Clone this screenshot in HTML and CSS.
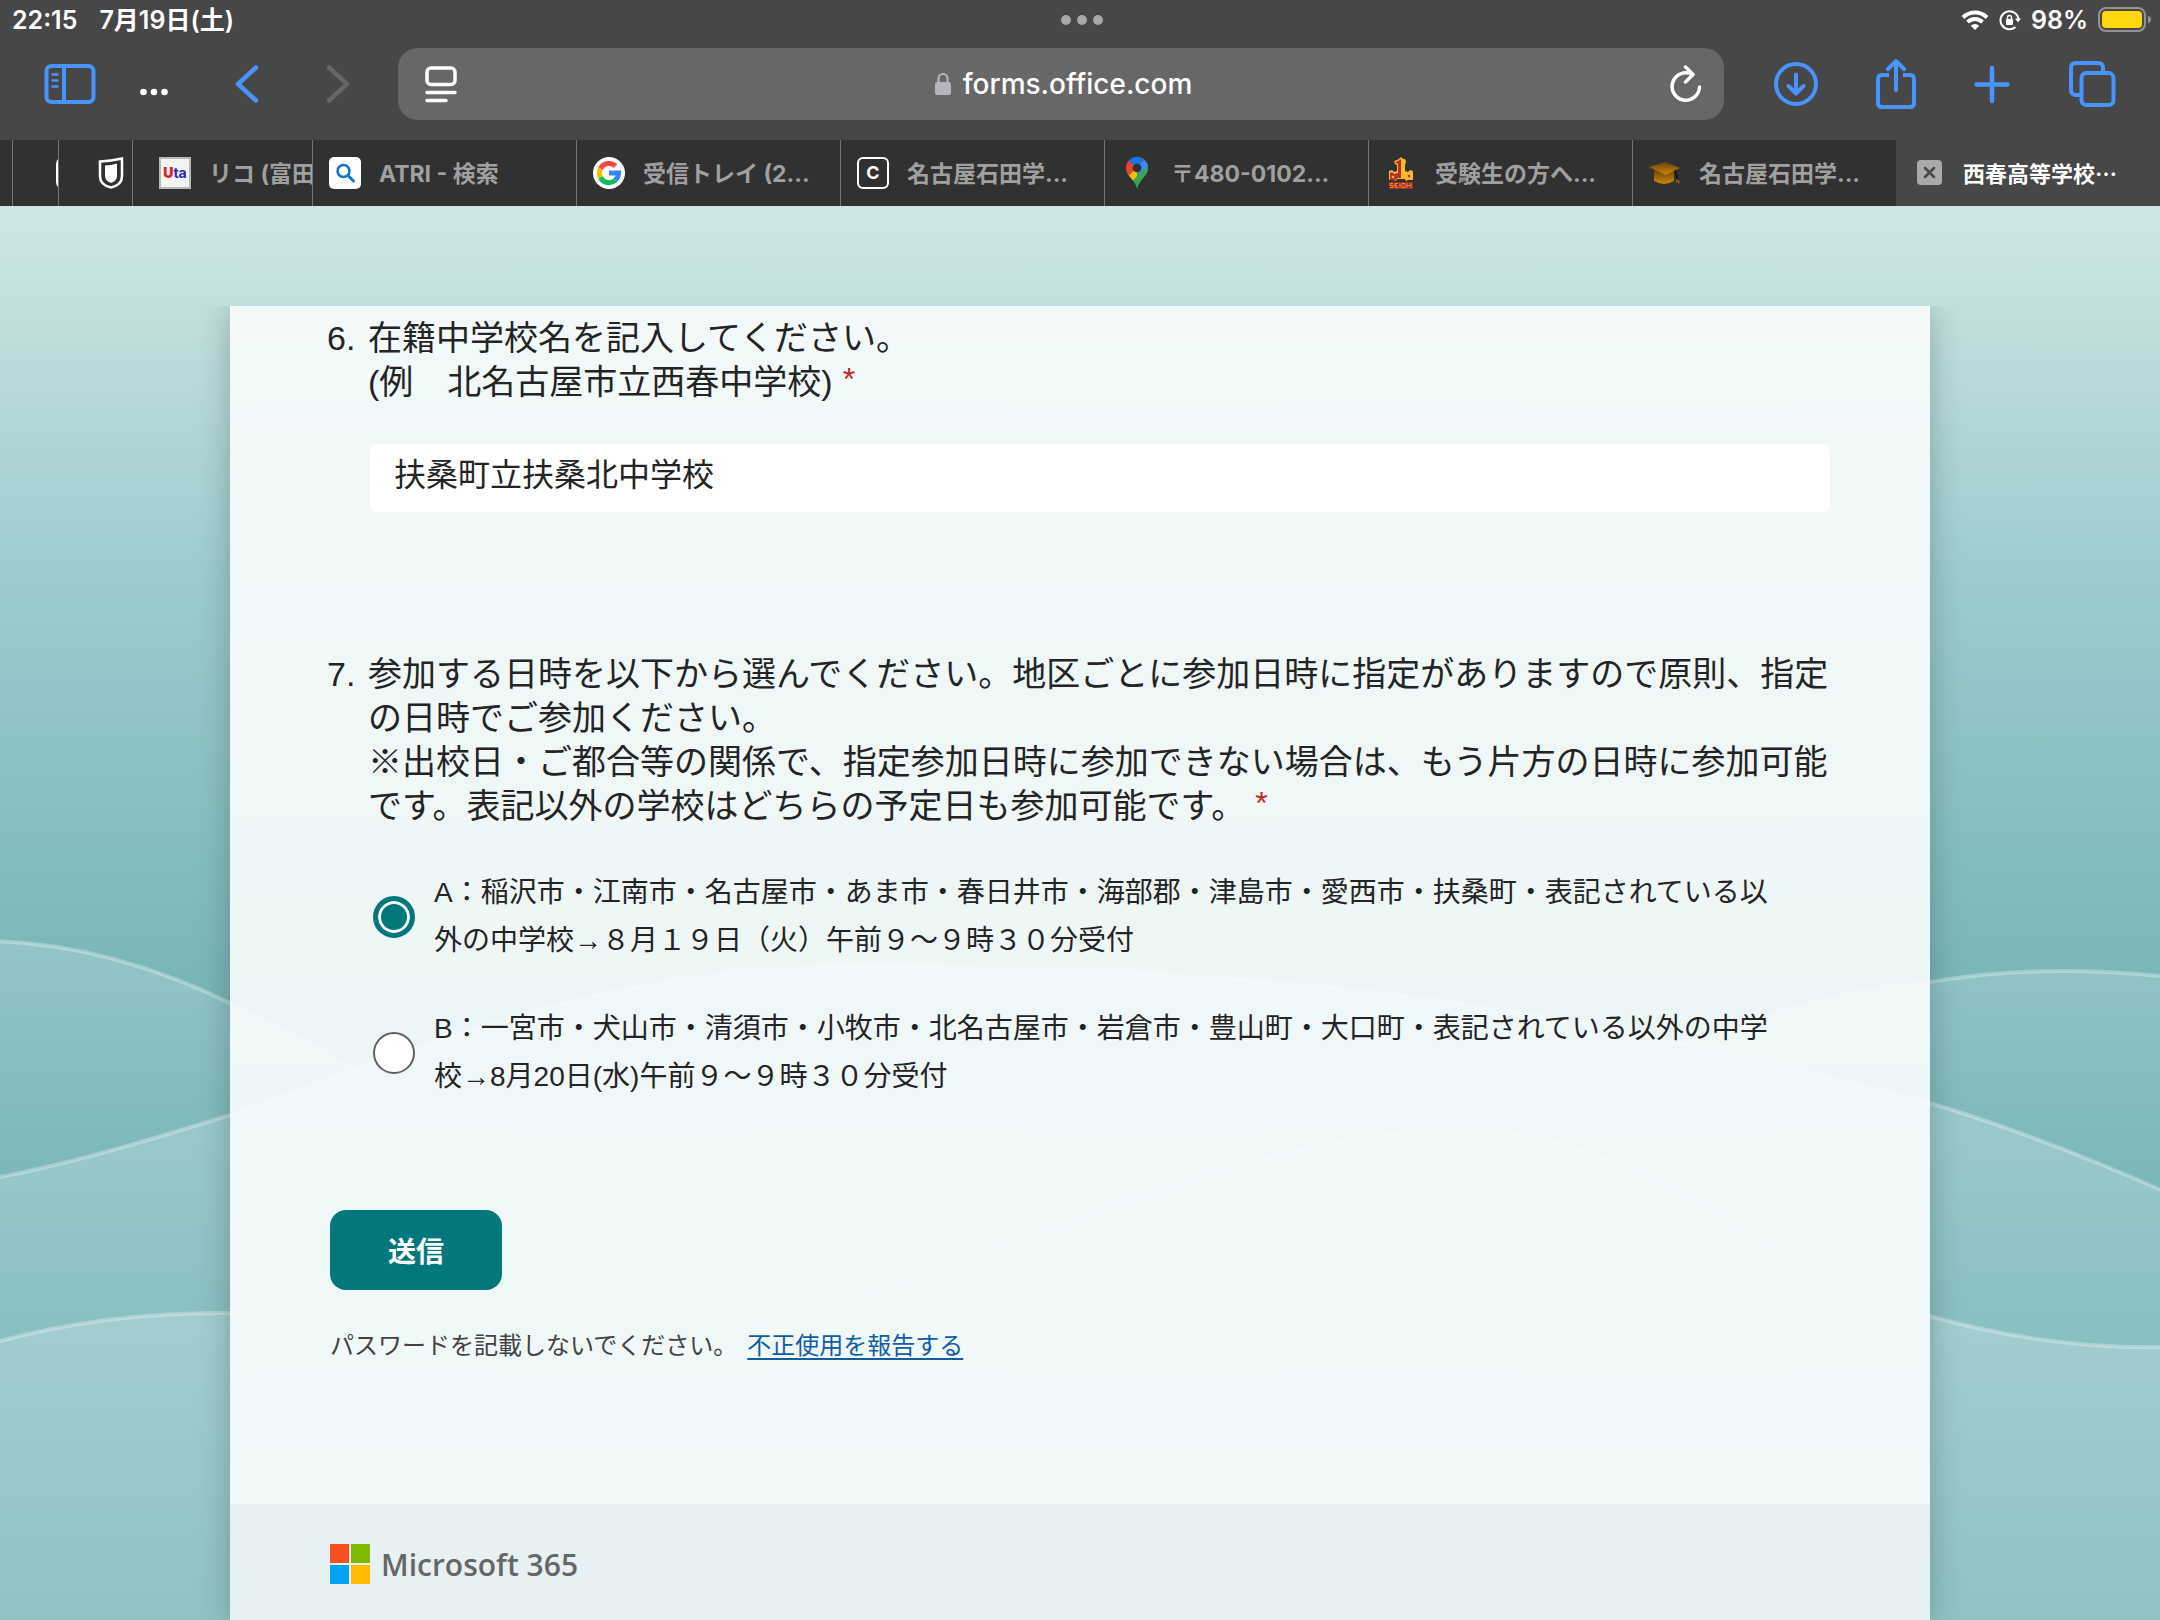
FILE: index.html
```html
<!DOCTYPE html>
<html lang="ja">
<head>
    <meta charset="UTF-8">
    <meta name="viewport" content="width=device-width, initial-scale=1.0">
    <title>西春高等学校</title>
    <link rel="stylesheet" href="styles.css">
</head>
<body>

<header class="browser">
    <div class="status">
        <div class="status-left">
            <span>22:15</span>
            <span>7月19日(土)</span>
        </div>
        <div class="status-dots"><i></i><i></i><i></i></div>
        <div class="status-right">
            <svg width="28" height="22" viewBox="0 0 28 22" fill="none" stroke="#fff" stroke-width="4">
                <path d="M2 8.500a17 17 0 0 1 24 0"/>
                <path d="M6.500 13.200a10.600 10.600 0 0 1 15 0"/>
                <path d="M14 21l-4.200-4.200a6 6 0 0 1 8.400 0z" fill="#fff" stroke="none"/>
            </svg>
            <svg width="22" height="22" viewBox="0 0 22 22" fill="none" stroke="#fff" stroke-width="2">
                <path d="M16.500 18a9 9 0 1 1 3-7"/>
                <path d="M16 9.500h6l-3 4z" fill="#fff" stroke="none"/>
                <rect x="7" y="10" width="7" height="6" rx="1" fill="#fff" stroke="none"/>
                <path d="M8.500 11V8.500a2 2 0 0 1 4 0V11" stroke-width="1.500"/>
            </svg>
            <span>98%</span>
            <svg width="54" height="26" viewBox="0 0 54 26">
                <rect x="1" y="1" width="46" height="23" rx="7" fill="none" stroke="#939393" stroke-width="2"/>
                <rect x="4" y="4" width="40" height="17" rx="4" fill="#ffd60a"/>
                <path d="M50 8.500c4 1.500 4 6.500 0 8z" fill="#939393"/>
            </svg>
        </div>
    </div>

    <div class="toolbar">
        <div class="tools tools-left">
            <button class="tool" aria-label="サイドバー">
                <svg width="52" height="42" viewBox="0 0 52 42" fill="none" stroke="#4794ff" stroke-width="4" stroke-linecap="round">
                    <rect x="2.500" y="3" width="47" height="36" rx="5"/>
                    <path d="M20 3v36"/>
                    <path d="M8.500 11.500h5M8.500 17.500h5M8.500 23.500h5" stroke-width="2.500"/>
                </svg>
            </button>
            <button class="tool" aria-label="その他">
                <svg width="28" height="42" viewBox="0 0 28 42" fill="#fff">
                    <circle cx="3.500" cy="29" r="3.300"/>
                    <circle cx="14" cy="29" r="3.300"/>
                    <circle cx="24.500" cy="29" r="3.300"/>
                </svg>
            </button>
            <button class="tool" aria-label="戻る">
                <svg width="24" height="40" viewBox="0 0 24 40" fill="none" stroke="#4794ff" stroke-width="4.500" stroke-linecap="round" stroke-linejoin="round">
                    <path d="M21 3.500L3 20l18 16.500"/>
                </svg>
            </button>
            <button class="tool" aria-label="進む">
                <svg width="24" height="40" viewBox="0 0 24 40" fill="none" stroke="#666" stroke-width="4.500" stroke-linecap="round" stroke-linejoin="round">
                    <path d="M3 3.500L21 20 3 36.500"/>
                </svg>
            </button>
        </div>

        <div class="address">
            <button class="tool" aria-label="ページ設定">
                <svg width="32" height="38" viewBox="0 0 32 38" fill="none" stroke="#fff" stroke-width="3.500" stroke-linecap="round">
                    <rect x="2" y="3" width="28" height="16.500" rx="4"/>
                    <path d="M2 27.500h28M2 35.500h19"/>
                </svg>
            </button>
            <div class="address-url">
                <svg width="16" height="24" viewBox="0 0 16 24">
                    <path d="M3.500 12V6.500a4.500 4.500 0 0 1 9 0V12" fill="none" stroke="#b5b5bd" stroke-width="2.200"/>
                    <rect x="0" y="10" width="16" height="13" rx="2.500" fill="#b5b5bd"/>
                </svg>
                <span>forms.office.com</span>
            </div>
            <button class="tool" aria-label="再読み込み">
                <svg width="32" height="38" viewBox="0 0 32 38" fill="none" stroke="#fff" stroke-width="3.500" stroke-linecap="round" stroke-linejoin="round">
                    <path d="M22 9.300A13.700 13.700 0 1 0 29.500 22"/>
                    <path d="M15.500 2l7.500 7.500-7.500 7.500"/>
                </svg>
            </button>
        </div>

        <div class="tools tools-right">
            <button class="tool" aria-label="ダウンロード">
                <svg width="44" height="50" viewBox="0 0 44 50" fill="none" stroke="#4794ff" stroke-width="4" stroke-linecap="round" stroke-linejoin="round">
                    <circle cx="22" cy="25" r="20"/>
                    <path d="M22 15.500v18.500M14.500 27l7.500 7.500 7.500-7.500"/>
                </svg>
            </button>
            <button class="tool" aria-label="共有">
                <svg width="40" height="50" viewBox="0 0 40 50" fill="none" stroke="#4794ff" stroke-width="4" stroke-linecap="round" stroke-linejoin="round">
                    <path d="M13 16H6q-4 0-4 4v24q0 4 4 4h28q4 0 4-4V20q0-4-4-4h-7" stroke-linecap="butt"/>
                    <path d="M20 31V2.500M12 10l8-8 8 8"/>
                </svg>
            </button>
            <button class="tool" aria-label="新規タブ">
                <svg width="36" height="50" viewBox="0 0 36 50" fill="none" stroke="#4794ff" stroke-width="4.500" stroke-linecap="round">
                    <path d="M18 9v33M2.500 25.500h31"/>
                </svg>
            </button>
            <button class="tool" aria-label="タブ一覧">
                <svg width="48" height="50" viewBox="0 0 48 50" fill="none" stroke="#4794ff" stroke-width="4">
                    <rect x="13.500" y="14" width="32" height="32" rx="5"/>
                    <path d="M13 36H8q-5 0-5-5V9q0-5 5-5h22q5 0 5 5v5"/>
                </svg>
            </button>
        </div>
    </div>

    <nav class="tabs">
        <div class="tab"></div>
        <div class="tab tab-cut-icon">
            <svg width="32" height="32" viewBox="0 0 32 32" fill="none" stroke="#fff" stroke-width="2">
                <rect x="1" y="1" width="30" height="30" rx="6"/>
            </svg>
        </div>
        <div class="tab tab-shield">
            <svg width="26" height="32" viewBox="0 0 26 32">
                <path d="M2 4.500Q13 4 24 1.500V19q0 9-11 11.500Q2 28 2 19z" fill="none" stroke="#fff" stroke-width="2.500"/>
                <path d="M7 8.500q6 0 12-2V19q0 5-6 7-6-2-6-7z" fill="#fff"/>
            </svg>
        </div>
        <div class="tab tab-uta">
            <span class="uta"><b>U</b>ta</span>
            <span class="tab-title">リコ (富田</span>
        </div>
        <div class="tab">
            <svg width="32" height="32" viewBox="0 0 32 32">
                <rect width="32" height="32" rx="5" fill="#fff"/>
                <circle cx="14.500" cy="14" r="6" fill="none" stroke="#1572c6" stroke-width="2.500"/>
                <path d="M19 18.500l5.500 5.500" stroke="#1572c6" stroke-width="3" stroke-linecap="round"/>
            </svg>
            <span class="tab-title">ATRI - 検索</span>
        </div>
        <div class="tab">
            <svg width="32" height="32" viewBox="0 0 32 32" fill="none" stroke-width="5">
                <circle cx="16" cy="16" r="16" fill="#fff"/>
                <path d="M7.500 11.500A9.600 9.600 0 0 1 22.500 9" stroke="#ff4641"/>
                <path d="M7.500 20.500a9.600 9.600 0 0 1 0-9" stroke="#fbbc05"/>
                <path d="M22.300 23.300A9.600 9.600 0 0 1 7.500 20.500" stroke="#0ebc5f"/>
                <path d="M16 16h9.600a9.600 9.600 0 0 1-3.500 7.300" stroke="#3186ff"/>
            </svg>
            <span class="tab-title">受信トレイ (2...</span>
        </div>
        <div class="tab">
            <span class="letter-icon">C</span>
            <span class="tab-title">名古屋石田学...</span>
        </div>
        <div class="tab">
            <svg width="32" height="32" viewBox="0 0 32 32">
                <clipPath id="pin"><path d="M16 0a11 11 0 0 1 11 11c0 8-9 11-11 21C14 22 5 19 5 11A11 11 0 0 1 16 0z"/></clipPath>
                <g clip-path="url(#pin)">
                    <path d="M0 0h32v32H0z" fill="#34a853"/>
                    <path d="M3 16V3h6l7 8-8 8z" fill="#ea4335"/>
                    <path d="M7 3l9 8L26 0H9z" fill="#1a73e8"/>
                    <path d="M16 11l9-10 4 6-10 12z" fill="#4285f4"/>
                    <path d="M16 21l12-14v25H16z" fill="#34a853"/>
                    <path d="M6 20l10-9v8l-6 7z" fill="#fbbc04"/>
                </g>
                <circle cx="16" cy="11" r="4.300" fill="#313131"/>
            </svg>
            <span class="tab-title">〒480-0102...</span>
        </div>
        <div class="tab">
            <svg width="32" height="32" viewBox="0 0 32 32">
                <path d="M16 0l2 2h2l1 3-1 3v6l3 1 2-2 3 1v9h-5l-2 1-1-2h-8l-1 2-2-1H4v-9l3-1 2 2 3-1V8l-2-1-1-3 3-1 2-1z" fill="#fdb827"/>
                <path d="M16 2v19h-4l-2 3-5-1v-7l2-1 2 2 4-1V7l-3-2 3-1z" fill="#b5302b"/>
                <circle cx="8" cy="20" r="1.300" fill="#fdb827"/>
                <circle cx="24" cy="19" r="1.300" fill="#b5302b"/>
                <path d="M4 25h24v7H4z" fill="#9a2f26"/>
                <path d="M8 26.500H5v2h3v2H5M13 26.500h-3v4h3M10 28.500h2M15 26v5M17 26.500v4h3v-4zM22 26v5M22 28.500h4M26 26v5" fill="none" stroke="#f08a2a"/>
            </svg>
            <span class="tab-title">受験生の方へ...</span>
        </div>
        <div class="tab">
            <svg width="32" height="32" viewBox="0 0 32 32">
                <defs>
                    <linearGradient id="cap" x2="0" y2="1"><stop stop-color="#6b4300"/><stop offset="1" stop-color="#c98a0c"/></linearGradient>
                </defs>
                <path d="M5 13h20v11q-10 6-20 0z" fill="url(#cap)"/>
                <path d="M0 10l16-5 15 6-14 7z" fill="url(#cap)"/>
                <path d="M26 13q2 5 2 9" fill="none" stroke="#111" stroke-width="1.500"/>
                <path d="M27 22l4 2-1 3-3-2z" fill="#8a5200"/>
            </svg>
            <span class="tab-title">名古屋石田学...</span>
        </div>
        <div class="tab tab-active">
            <button class="tool" aria-label="タブを閉じる">
                <svg width="26" height="26" viewBox="0 0 26 26">
                    <rect width="25" height="25" rx="4" fill="#aaa"/>
                    <path d="M8 8l9 9M17 8l-9 9" stroke="#474747" stroke-width="2.500" stroke-linecap="round"/>
                </svg>
            </button>
            <span class="tab-title">西春高等学校…</span>
        </div>
    </nav>
</header>

<main class="page">
    <svg class="waves" viewBox="0 0 2160 1414" preserveAspectRatio="none">
        <defs>
            <linearGradient id="waveA" gradientUnits="userSpaceOnUse" x1="0" y1="735" x2="0" y2="990">
                <stop stop-color="#93c5c8"/><stop offset="1" stop-color="#7ab6b8"/>
            </linearGradient>
            <linearGradient id="waveB" gradientUnits="userSpaceOnUse" x1="0" y1="900" x2="0" y2="1180">
                <stop stop-color="#9bc9cb"/><stop offset="1" stop-color="#85bec0"/>
            </linearGradient>
            <linearGradient id="waveC" gradientUnits="userSpaceOnUse" x1="0" y1="1105" x2="0" y2="1414">
                <stop stop-color="#a3cdcf"/><stop offset="1" stop-color="#8fc3c4"/>
            </linearGradient>
        </defs>
        <path class="wave-line" fill="url(#waveA)" d="M-10 735C80 737 160 763 230 797C500 930 700 1110 1020 1112C1340 1110 1560 810 1930 776Q2040 757 2170 771V1430H-10z"/>
        <path class="wave-line" fill="url(#waveB)" d="M-10 973C70 958 150 934 230 909C400 850 600 760 850 760C1300 760 1560 800 1930 897Q2040 930 2170 988V1430H-10z"/>
        <path class="wave-line" fill="url(#waveC)" d="M-10 1138Q100 1106 230 1107C380 1106 420 1150 600 1150C900 1120 1200 924 1460 924C1640 924 1760 1060 1930 1110Q2050 1144 2170 1141V1430H-10z"/>
    </svg>

    <div class="scroll">
        <form class="card">
            <div class="card-body">
                <section class="question">
                    <span class="number">6.</span>
                    <div class="question-body">
                        <label class="question-title" for="school">在籍中学校名を記入してください。<br>(例　北名古屋市立西春中学校)<span class="required">*</span></label>
                        <input class="answer" type="text" id="school" value="扶桑町立扶桑北中学校">
                    </div>
                </section>

                <section class="question">
                    <span class="number">7.</span>
                    <div class="question-body" role="radiogroup" aria-labelledby="q7">
                        <div class="question-title" id="q7">参加する日時を以下から選んでください。地区ごとに参加日時に指定がありますので原則、指定の日時でご参加ください。<br>※出校日・ご都合等の関係で、指定参加日時に参加できない場合は、もう片方の日時に参加可能です。表記以外の学校はどちらの予定日も参加可能です。<span class="required">*</span></div>
                        <div class="options">
                            <label class="option">
                                <input type="radio" name="date" checked>
                                <span>A：稲沢市・江南市・名古屋市・あま市・春日井市・海部郡・津島市・愛西市・扶桑町・表記されている以外の中学校<span class="arrow">→</span>８月１９日（火）午前９～９時３０分受付</span>
                            </label>
                            <label class="option">
                                <input type="radio" name="date">
                                <span>B：一宮市・犬山市・清須市・小牧市・北名古屋市・岩倉市・豊山町・大口町・表記されている以外の中学校<span class="arrow">→</span>8月20日(水)午前９～９時３０分受付</span>
                            </label>
                        </div>
                    </div>
                </section>

                <button class="submit" type="button">送信</button>
                <p class="note">パスワードを記載しないでください。<a href="#">不正使用を報告する</a></p>
            </div>

            <footer class="card-footer">
                <svg width="40" height="40" viewBox="0 0 40 40">
                    <path d="M0 0h19v19H0z" fill="#f65022"/>
                    <path d="M21 0h19v19H21z" fill="#7fba00"/>
                    <path d="M0 21h19v19H0z" fill="#00a4ef"/>
                    <path d="M21 21h19v19H21z" fill="#ffb900"/>
                </svg>
                <span>Microsoft 365</span>
            </footer>
        </form>
    </div>
</main>

</body>
</html>
```

FILE: styles.css
```css
* {
    box-sizing: border-box;
}
body {
    margin: 0;
    min-height: 100vh;
    display: flex;
    flex-direction: column;
    font-family: "Liberation Sans", "Noto Sans CJK JP", sans-serif;
    color: #242424;
}
svg {
    display: block;
    flex: none;
}

/* browser bar */
.browser {
    background-color: #474747;
    color: #fff;
    font-family: Inter, "Noto Sans CJK JP", sans-serif;
}
.status {
    display: grid;
    grid-template-columns: 1fr auto 1fr;
    align-items: center;
    height: 40px;
    padding: 0 8px 0 12px;
    font-size: 25px;
    font-weight: 600;
    line-height: 30px;
}
.status-left {
    display: flex;
    align-items: baseline;
    gap: 22px;
}
.status-right {
    display: flex;
    justify-content: flex-end;
    align-items: center;
    gap: 10px;
}
.status-dots {
    display: flex;
    gap: 6px;
}
.status-dots i {
    width: 10px;
    height: 10px;
    border-radius: 50%;
    background-color: #a8a8a8;
}
.toolbar {
    display: flex;
    align-items: center;
    height: 100px;
    padding: 0 44px 12px;
}
.tool {
    display: block;
    padding: 0;
    border: none;
    background: none;
    cursor: pointer;
}
.tools {
    display: flex;
    align-items: center;
    flex: none;
}
.tools-left {
    gap: 67px;
    margin-right: 48px;
}
.tools-left .tool:first-child {
    margin-right: -23px;
}
.tools-right {
    gap: 58px;
    margin-left: 50px;
}
.address {
    flex: 1;
    display: flex;
    align-items: center;
    justify-content: space-between;
    height: 72px;
    padding: 0 22px 0 27px;
    border-radius: 20px;
    background-color: #676767;
}
.address-url {
    display: flex;
    align-items: center;
    gap: 12px;
    font-size: 28px;
    font-weight: 500;
}

/* tab strip */
.tabs {
    display: grid;
    grid-template-columns: 12fr 46fr 74fr 180fr repeat(7, 264fr);
    height: 66px;
    background-color: #313131;
}
.tab {
    display: flex;
    align-items: center;
    gap: 18px;
    min-width: 0;
    overflow: hidden;
    padding-left: 16px;
    border-left: 1px solid #757575;
    color: #a0a0a0;
    font-size: 23px;
    font-weight: 700;
    white-space: nowrap;
}
.tab:first-child {
    padding: 0;
    border: none;
}
.tab-title {
    padding-bottom: 2px;
}
.tab-cut-icon {
    padding-left: 43px;
}
.tab-shield {
    padding-left: 39px;
}
.tab-uta {
    padding-left: 26px;
}
.tab-active {
    gap: 20px;
    padding-left: 21px;
    border: none;
    background-color: #474747;
    color: #fff;
    font-family: "Noto Sans CJK JP", sans-serif;
    font-size: 22px;
}
.uta {
    flex: none;
    width: 32px;
    height: 32px;
    border: 2px solid #b8b8b8;
    background-color: #f4f4f4;
    color: #2a2ab0;
    font-size: 14px;
    line-height: 28px;
    text-align: center;
}
.uta b {
    color: #d22;
}
.letter-icon {
    flex: none;
    width: 32px;
    height: 32px;
    border: 2px solid #fff;
    border-radius: 6px;
    color: #fff;
    font-size: 18px;
    line-height: 28px;
    text-align: center;
}

/* page */
.page {
    flex: 1;
    position: relative;
    display: flex;
    flex-direction: column;
    padding-top: 100px;
    background: linear-gradient(#cfe6e7, #c2dfdf 100px, #9bcbcd 380px, #79b6b7 780px);
}
.waves {
    position: absolute;
    top: 0;
    left: 0;
    width: 100%;
    height: 100%;
}
.wave-line {
    stroke: rgba(255, 255, 255, 0.3);
    stroke-width: 4px;
}
.scroll {
    flex: 1;
    position: relative;
    display: flex;
    justify-content: center;
    overflow: hidden;
}
.card {
    display: flex;
    flex-direction: column;
    width: 100%;
    max-width: 1700px;
    background-color: rgba(246, 251, 251, 0.93);
    box-shadow: 0 0 30px rgba(0, 0, 0, 0.24);
}
.card-body {
    flex: 1;
    padding: 10px 100px 0 97px;
}
.question {
    display: flex;
    font-size: 34px;
    line-height: 44px;
}
.question + .question {
    margin-top: 140px;
}
.number {
    flex: none;
    width: 41px;
}
.question-body {
    flex: 1;
    min-width: 0;
}
.question-title {
    display: block;
}
.required {
    margin-left: 10px;
    color: #c4262e;
    font-size: 32px;
    line-height: 1;
    vertical-align: 4px;
}
.answer {
    display: block;
    width: calc(100% - 2px);
    height: 68px;
    margin: 40px 0 0 2px;
    padding: 0 24px 12px;
    border: none;
    border-radius: 6px;
    background-color: #fff;
    color: #242424;
    font-family: inherit;
    font-size: 32px;
}
.options {
    display: flex;
    flex-direction: column;
    gap: 40px;
    margin-top: 41px;
    padding: 0 50px 0 5px;
}
.option {
    display: flex;
    align-items: center;
    gap: 19px;
    font-size: 28px;
    line-height: 48px;
}
.option input {
    appearance: none;
    flex: none;
    width: 42px;
    height: 42px;
    margin: 0;
    border: 2px solid #616161;
    border-radius: 50%;
    background-color: #fff;
}
.option input:checked {
    border: 5px solid #03787c;
    background: #03787c;
    box-shadow: inset 0 0 0 3px #fff;
}
.arrow {
    font-family: "Liberation Serif", serif;
}
.submit {
    display: block;
    width: 172px;
    height: 80px;
    margin: 109px 0 0 3px;
    border: none;
    border-radius: 16px;
    background-color: #03787c;
    color: #fff;
    font-family: inherit;
    font-size: 28px;
    font-weight: 700;
    cursor: pointer;
}
.note {
    margin: 38px 0 0 3px;
    color: #424242;
    font-size: 24px;
    line-height: 36px;
}
.note a {
    margin-left: 10px;
    color: #115ea3;
    text-decoration-thickness: 2px;
    text-underline-offset: 4px;
}
.card-footer {
    display: flex;
    align-items: center;
    gap: 11px;
    height: 116px;
    padding: 4px 100px 0;
    background-color: rgba(213, 227, 234, 0.3);
    color: #666;
    font-family: "Open Sans", sans-serif;
    font-size: 30px;
    font-weight: 600;
}
```
